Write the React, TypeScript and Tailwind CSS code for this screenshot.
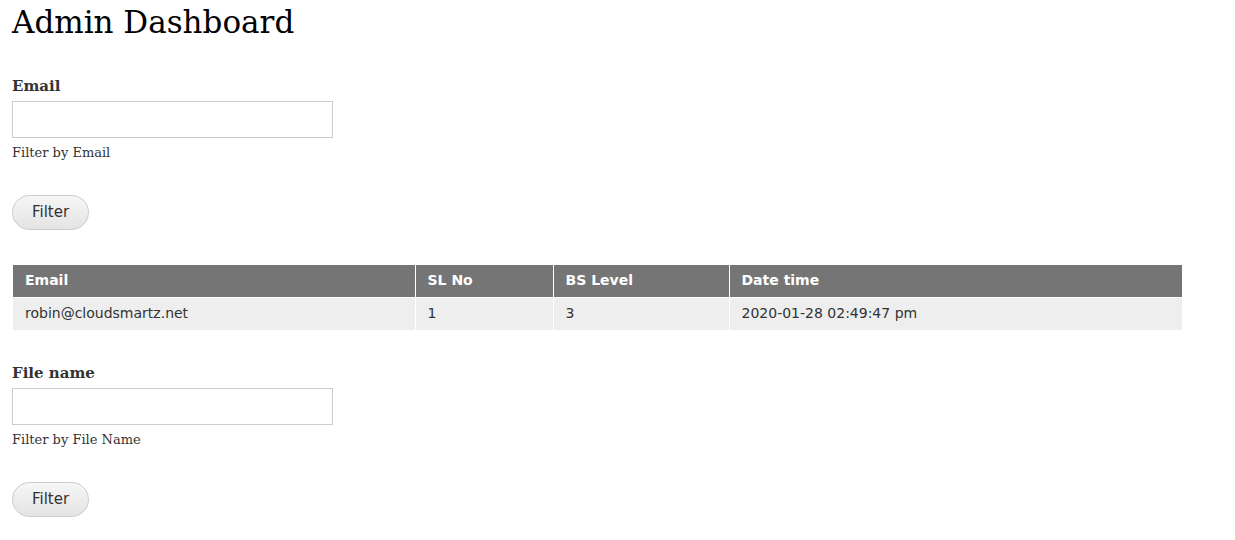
import React from 'react';

const serif = "font-['DejaVu_Serif',Georgia,serif]";
const sans = "font-['DejaVu_Sans',Verdana,sans-serif]";

const FilterField: React.FC<{ label: string; help: string }> = ({ label, help }) => (
  <div className="flex flex-col">
    <label className={`${serif} text-[15px] font-bold text-[#333] leading-[20px]`}>{label}</label>
    <input type="text" className="mt-[5px] w-[321px] h-[37px] border border-[#ccc] bg-white outline-none" />
    <p className={`${serif} text-[13px] text-[#333] leading-[18px] mt-[6px]`}>{help}</p>
    <button
      className={`${sans} mt-[33px] w-[77px] h-[35px] rounded-full border border-[#ccc] bg-gradient-to-b from-[#f6f6f6] to-[#e4e4e4] text-[15px] text-[#333]`}
    >
      Filter
    </button>
  </div>
);

const rows = [{ email: 'robin@cloudsmartz.net', sl: '1', level: '3', date: '2020-01-28 02:49:47 pm' }];

export default function App() {
  return (
    <div className="bg-white min-h-[540px] px-[12px] pt-[2px]">
      <h1 className={`${serif} text-[31px] leading-[40px] text-black font-normal`}>Admin Dashboard</h1>

      <div className="mt-[34px]">
        <FilterField label="Email" help="Filter by Email" />
      </div>

      <table className={`${sans} mt-[35px] ml-[1px] border-collapse text-[14px]`}>
        <colgroup>
          <col className="w-[402px]" />
          <col className="w-[138px]" />
          <col className="w-[176px]" />
          <col className="w-[453px]" />
        </colgroup>
        <thead>
          <tr className="bg-[#757575] text-white h-[32px]">
            {['Email', 'SL No', 'BS Level', 'Date time'].map((h, i) => (
              <th key={h} className={`text-left font-bold px-[12px] ${i < 3 ? 'border-r border-white' : ''}`}>{h}</th>
            ))}
          </tr>
        </thead>
        <tbody>
          {rows.map((r) => (
            <tr key={r.email} className="bg-[#eeeeee] text-[#333] h-[33px] border-t border-white">
              {[r.email, r.sl, r.level, r.date].map((v, i) => (
                <td key={i} className={`px-[12px] ${i < 3 ? 'border-r border-white' : ''}`}>{v}</td>
              ))}
            </tr>
          ))}
        </tbody>
      </table>

      <div className="mt-[33px]">
        <FilterField label="File name" help="Filter by File Name" />
      </div>
    </div>
  );
}
